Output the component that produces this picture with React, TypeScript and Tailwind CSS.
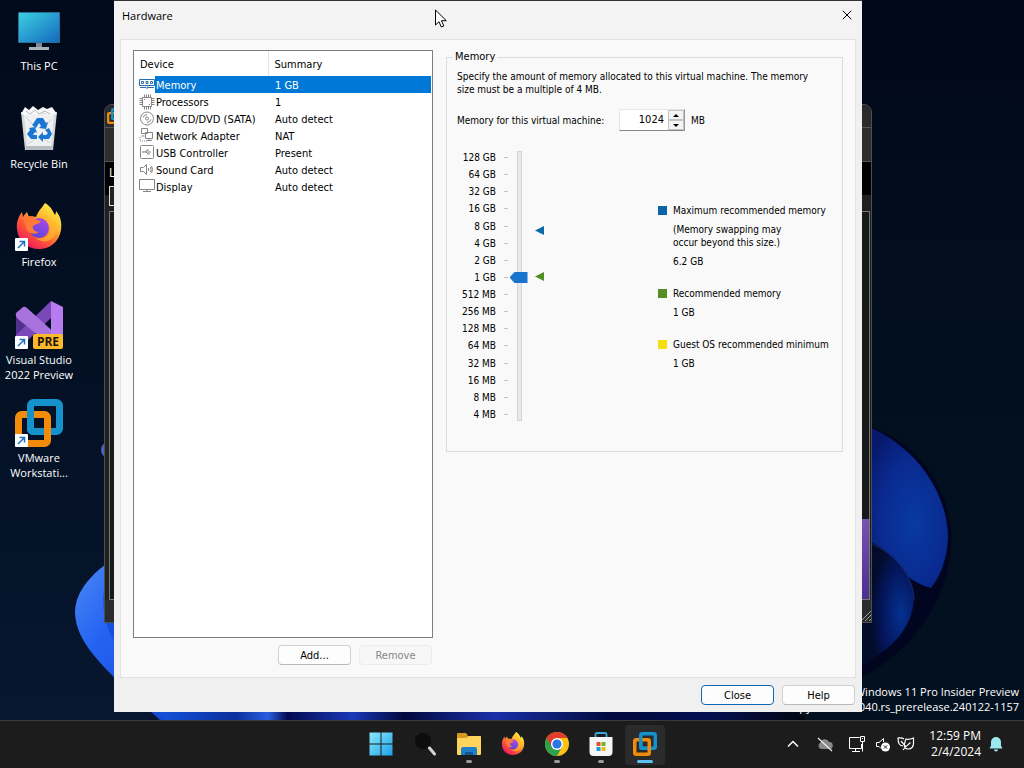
import { ReactNode, useState } from "react";
import { X } from "lucide-react";

export default function App() {
	return (
		<div className="h-screen flex flex-col overflow-hidden bg-[#020c1c] font-['Open_Sans',sans-serif]">
			<main className="relative flex-1 min-h-0">
				<Wallpaper />
				<DesktopIcons />
				<BackWindow />
				<div className="absolute right-[5px] bottom-1.5 text-right text-white text-[11px] leading-[15px]">
					<p>Windows 11 Pro Insider Preview</p>
					<p>Evaluation copy. Build 26040.rs_prerelease.240122-1157</p>
				</div>
				<HardwareDialog />
				<Cursor />
			</main>
			<Taskbar />
		</div>
	);
}

function Wallpaper() {
	return (
		<svg className="absolute inset-0 w-full h-full" viewBox="0 0 1024 720" preserveAspectRatio="none" aria-hidden="true">
			<defs>
				<linearGradient id="sky" x1="0" y1="0" x2="0" y2="1">
					<stop offset="0" stopColor="#010a1a" />
					<stop offset="0.5" stopColor="#031024" />
					<stop offset="1" stopColor="#08172f" />
				</linearGradient>
				<linearGradient id="skyRight" x1="0" y1="0" x2="0" y2="1">
					<stop offset="0" stopColor="#010818" />
					<stop offset="0.5" stopColor="#020f1f" />
					<stop offset="1" stopColor="#03101f" />
				</linearGradient>
				<linearGradient id="petalLeft" x1="0" y1="0" x2="1" y2="1">
					<stop offset="0" stopColor="#4f8bf5" />
					<stop offset="0.35" stopColor="#2463f2" />
					<stop offset="1" stopColor="#0d3fc4" />
				</linearGradient>
				<radialGradient id="petalRight" cx="0.6" cy="0.6" r="0.65">
					<stop offset="0" stopColor="#083aa0" />
					<stop offset="0.6" stopColor="#0a2a90" />
					<stop offset="1" stopColor="#06196a" />
				</radialGradient>
				<radialGradient id="petalInner" cx="0.75" cy="0.6" r="0.6">
					<stop offset="0" stopColor="#053190" />
					<stop offset="0.6" stopColor="#04165c" />
					<stop offset="1" stopColor="#020b2a" />
				</radialGradient>
				<linearGradient id="stems" x1="0" y1="0" x2="1" y2="0">
					<stop offset="0" stopColor="#1552dc" />
					<stop offset="0.12" stopColor="#0b2f9c" />
					<stop offset="0.17" stopColor="#2a5de0" />
					<stop offset="0.2" stopColor="#030a50" />
					<stop offset="0.3" stopColor="#1a38b8" />
					<stop offset="0.38" stopColor="#02083c" />
					<stop offset="0.52" stopColor="#1a2fa8" />
					<stop offset="0.7" stopColor="#020a3c" />
					<stop offset="0.85" stopColor="#031050" />
					<stop offset="1" stopColor="#02060f" />
				</linearGradient>
			</defs>
			<rect width="512" height="720" fill="url(#sky)" />
			<rect x="512" width="512" height="720" fill="url(#skyRight)" />
			<circle cx="109" cy="450" r="8" fill="#4f62c0" />
			<path d="M125 552C92 570 75 592 75 612C76 642 98 664 160 720H210V552Z" fill="url(#petalLeft)" />
			<path d="M106 578C98 615 106 640 150 690L180 640L130 560Z" fill="#1350dc" />
			<path d="M158 711H800L806 720H166Z" fill="url(#stems)" />
			<path d="M860 424C915 436 954 490 951 545C947 607 908 655 855 681Z" fill="#01051f" />
			<path d="M862 424C915 444 948 492 948 538C947 560 940 577 931 588C905 582 885 552 862 540Z" fill="url(#petalRight)" />
			<path d="M862 538C893 550 914 575 914 600C911 630 892 648 862 665Z" fill="url(#petalInner)" />
			<path d="M862 540C893 550 914 575 914 600" fill="none" stroke="#17276a" />
		</svg>
	);
}

function DesktopIcons() {
	const shortcuts = [
		{ label: ["This PC"], icon: <PcIcon />, linked: false },
		{ label: ["Recycle Bin"], icon: <BinIcon />, linked: false },
		{ label: ["Firefox"], icon: <FirefoxIcon className="size-12" />, linked: true },
		{ label: ["Visual Studio", "2022 Preview"], icon: <StudioIcon />, linked: true },
		{ label: ["VMware", "Workstati..."], icon: <VmwareIcon className="size-12" />, linked: true },
	];
	return (
		<nav className="relative w-[78px] pt-[7px] text-white text-center text-[11px] leading-[15px]">
			{shortcuts.map((item) => (
				<a key={item.label[0]} href="#" className="h-[98px] flex flex-col items-center whitespace-nowrap">
					<span className="relative size-12 mb-[3px]">
						{item.icon}
						{item.linked && <ShortcutArrow />}
					</span>
					{item.label.map((line) => (
						<span key={line}>{line}</span>
					))}
				</a>
			))}
		</nav>
	);
}

function ShortcutArrow() {
	return (
		<svg className="absolute left-0 bottom-0 size-[13px]" viewBox="0 0 13 13">
			<rect width="13" height="13" rx="1" fill="#fff" />
			<path d="M3 10L9 4M4.500 3.500H9.500V8.500" fill="none" stroke="#1b72c4" strokeWidth="1.500" />
		</svg>
	);
}

function PcIcon() {
	return (
		<svg viewBox="0 0 48 48" className="size-12">
			<defs>
				<linearGradient id="screen" x1="0" y1="0" x2="1" y2="1">
					<stop offset="0" stopColor="#39cfe0" />
					<stop offset="1" stopColor="#1669c0" />
				</linearGradient>
			</defs>
			<rect x="3" y="5" width="42" height="31" rx="1" fill="#286f98" />
			<rect x="4" y="6" width="40" height="29" fill="url(#screen)" />
			<path d="M21 36h6v5h-6z" fill="#7d8b96" />
			<path d="M14 40h20v3H14z" fill="#a9b3ba" />
		</svg>
	);
}

function BinIcon() {
	return (
		<svg viewBox="0 0 48 48" className="size-12">
			<path d="M6 7L42 7L38 45H10Z" fill="#d5d8dc" />
			<path d="M9 9L39 9L36 41H12Z" fill="#eef0f2" />
			<path d="M6 9L10 2L14 5L18 1L23 5L28 2L32 4L37 2L42 9L36 10L29 8L22 10L15 9L10 10Z" fill="#f8f8f8" />
			<path d="M11 6L15 9L20 5L24 9L30 6L35 9" fill="none" stroke="#b4b8bc" />
			<path d="M11 12L18 20M13 39L20 34M37 14L31 20M35 38L29 34" stroke="#cfd2d6" />
			<path d="M10 41H38L37 45H11Z" fill="#b9bdc2" />
			<g fill="#1976d2">
				<path d="M18 19L22 13H28L31 18L33 17L31 24L24 23L26 21L24 18L21 23L17 20Z" />
				<path d="M34 23L37 29L34 34H28V37L23 32L28 27V30H31L33 28L30 25Z" />
				<path d="M14 23L20 22L22 28L20 27L18 30H22V34H16L12 29L15 25Z" />
			</g>
		</svg>
	);
}

function FirefoxIcon({ className }: { className: string }) {
	return (
		<svg viewBox="0 0 48 48" className={className}>
			<defs>
				<linearGradient id="fire" x1="0.85" y1="0.05" x2="0.2" y2="0.95">
					<stop offset="0" stopColor="#fff04a" />
					<stop offset="0.35" stopColor="#ffb52e" />
					<stop offset="0.65" stopColor="#ff5a36" />
					<stop offset="1" stopColor="#f0175f" />
				</linearGradient>
				<linearGradient id="globe" x1="0.8" y1="0" x2="0.2" y2="1">
					<stop offset="0" stopColor="#b045e8" />
					<stop offset="1" stopColor="#5148d8" />
				</linearGradient>
			</defs>
			<path d="M30 0C37 4 38 9 40 12C41 10 41 9 41 8C46 14 47 20 46 27C44 39 35 46 24 46C12 46 3 38 2 26C1 19 4 13 7 9L8 14C9 12 11 10 12 9L14 14C16 13 18 13 21 14C23 8 26 6 30 0Z" fill="url(#fire)" />
			<circle cx="24" cy="25" r="10" fill="url(#globe)" />
			<path d="M8 15C13 11 19 14 22 17L26 18C25 21 20 21 18 23C17 26 20 29 24 29C20 32 13 31 11 25C10 22 10 18 8 15Z" fill="#ff7a35" />
			<path d="M25 15C33 14 37 20 35 27C34 33 28 37 20 35C33 44 45 34 40 18C37 20 35 14 31 12Z" fill="#ffb52e" opacity="0.75" />
		</svg>
	);
}

function StudioIcon() {
	return (
		<svg viewBox="0 0 48 48" className="size-12">
			<path d="M1 14V42L12 35V20Z" fill="#52318f" />
			<path d="M1 34L36 0V17L10 42L1 40Z" fill="#7a48b8" />
			<path d="M1 12L8 6Q10 5 12 7L42 34L36 45L3 18Q0 15 1 12Z" fill="#a873dc" />
			<path d="M36 0L48 6V41L36 47Z" fill="#b77cf0" />
			<rect x="18" y="33" width="30" height="15" rx="2" fill="#fcb92c" />
			<text x="33" y="45" textAnchor="middle" fontSize="12" fontWeight="700" fontFamily="Open Sans, sans-serif" fill="#1d1608">PRE</text>
		</svg>
	);
}

function VmwareIcon({ className }: { className: string }) {
	return (
		<svg viewBox="0 0 48 48" className={className} fill="none" strokeWidth="7">
			<rect x="15.500" y="3.500" width="29" height="29" rx="3" stroke="#1492cb" />
			<rect x="3.500" y="15.500" width="29" height="29" rx="3" stroke="#f38b0a" />
			<path d="M15.500 11V29.500Q15.500 32.500 18.500 32.500H28" stroke="#1492cb" />
		</svg>
	);
}

// VMware main window, only its edges show around the dialog
function BackWindow() {
	return (
		<div className="absolute top-[104px] left-[104px] right-[152px] bottom-[97px] flex flex-col rounded-t-lg border border-[#4b4f52] bg-[#202020] overflow-hidden text-white" aria-hidden="true">
			<div className="h-[23px] shrink-0 flex items-center pl-0.5 border-b border-[#555] bg-[#2a2a2a]">
				<VmwareIcon className="size-4" />
			</div>
			<div className="h-[34px] shrink-0 border-b border-[#555] bg-[#2e2e2e]" />
			<div className="h-[33px] shrink-0 px-1 bg-black flex flex-col gap-0.5">
				<span className="text-[12px] leading-[22px]">Library</span>
				<div className="h-5 shrink-0 w-40 border border-[#ddd] bg-[#222]" />
			</div>
			<div className="flex-1 flex flex-col justify-end items-end mt-4 ml-1 mr-px border border-[#777] bg-[#171a1b]">
				<div className="w-1/4 h-20 bg-linear-to-b from-[#7952b3] to-[#4c2d91]" />
			</div>
			<div className="h-[22px] shrink-0 flex justify-end items-end bg-[#2a2c2d]">
				<svg viewBox="0 0 10 12" className="w-2.5 h-3" stroke="#a0a0a0">
					<path d="M0 11L10 1M4 11L10 5M8 11L10 9" />
				</svg>
			</div>
		</div>
	);
}

function HardwareDialog() {
	return (
		<section
			role="dialog"
			aria-label="Hardware"
			className="absolute top-0 bottom-2 left-[114px] right-[162px] flex flex-col border-t border-[#333] bg-[#f0f0f0] text-black text-[11px] leading-[13px] font-['DejaVu_Sans_Condensed','DejaVu_Sans',sans-serif]"
		>
			<header className="h-[38px] shrink-0 flex items-start justify-between px-2 bg-[#f3f3f3]">
				<h1 className="pt-[7px] leading-[15px] font-['Open_Sans',sans-serif]">Hardware</h1>
				<button aria-label="Close window" className="pt-1.5 -mr-px">
					<X className="size-4" strokeWidth={1.5} />
				</button>
			</header>
			<div className="flex-1 min-h-0 mx-1.5 flex gap-[13px] pt-2.5 pb-3 px-3 border border-[#e2e2e2] bg-[#f9f9f9]">
				<div className="w-[300px] shrink-0 flex flex-col">
					<DeviceTable />
					<div className="flex justify-end gap-2 pt-[7px] pr-px">
						<DialogButton>Add...</DialogButton>
						<DialogButton disabled>Remove</DialogButton>
					</div>
				</div>
				<MemoryPanel />
			</div>
			<footer className="h-[34px] shrink-0 flex justify-end items-center gap-2 pr-[7px]">
				<DialogButton primary>Close</DialogButton>
				<DialogButton>Help</DialogButton>
			</footer>
		</section>
	);
}

function DialogButton({ children, primary, disabled }: { children: ReactNode; primary?: boolean; disabled?: boolean }) {
	let look = "border-[#d0d0d0] border-b-[#b8b8b8] bg-[#fdfdfd]";
	if (primary) look = "border-[#1068b4] bg-[#fdfdfd]";
	if (disabled) look = "border-[#ececec] bg-[#f7f7f7] text-[#868686]";
	return (
		<button disabled={disabled} className={`w-[73px] h-5 rounded border ${look}`}>
			{children}
		</button>
	);
}

function DeviceTable() {
	const [selected, setSelected] = useState("Memory");
	const devices = [
		{ name: "Memory", summary: "1 GB", icon: <path d="M.5 2.500h15v6H.5zM2.500 4.500h2v2h-2zM7 4.500h2v2h-2zM11.500 4.500h2v2h-2zM1 10.500h6M8 12v-2h1M9 10.500h6" /> },
		{ name: "Processors", summary: "1", icon: <path d="M3.500 3.500h9v9h-9zM5.500 .5v3M7.500 .5v3M9.500 .5v3M11.500 .5v3M5.500 12.500v3M7.500 12.500v3M9.500 12.500v3M11.500 12.500v3M.5 4.500h3M.5 6.500h3M.5 8.500h3M.5 10.500h3M12.500 4.500h3M12.500 6.500h3M12.500 8.500h3M12.500 10.500h3M5 5.500h1M10 10.500h1" /> },
		{ name: "New CD/DVD (SATA)", summary: "Auto detect", icon: <><circle cx="8" cy="7.500" r="6.500" /><circle cx="8" cy="7.500" r="1.500" /><path d="M4 6.500q1-3 4-3M12 8.500q-1 3-4 3" /></> },
		{ name: "Network Adapter", summary: "NAT", icon: <><path d="M2.500 .5h6v5h-6zM6.500 4.500h7v6h-7zM8 12.500h5M10 10v2M2.500 8h3" /><path d="M1 9v4h7" strokeDasharray="1 1" /></> },
		{ name: "USB Controller", summary: "Present", icon: <><rect x="1.500" y=".5" width="13" height="13" rx="1" /><path d="M4 7h8M6 7l2-2h2M7 7l2 2h2M4 6v2" /></> },
		{ name: "Sound Card", summary: "Auto detect", icon: <path d="M1.500 5.500h3l3-3v10l-3-3h-3zM9.500 6v3M11.500 5q1 2.500 0 5M12.500 4q2 3.500 0 7" /> },
		{ name: "Display", summary: "Auto detect", icon: <path d="M.5 .5h15v10H.5zM8 10.500v2M4 12.500h8" /> },
	];
	return (
		<div className="flex-1 min-h-0 border border-[#7a7d83] bg-white pr-px">
			<table className="w-full table-fixed border-collapse text-left">
				<colgroup>
					<col className="w-[21px]" />
					<col className="w-[113px]" />
					<col />
				</colgroup>
				<thead>
					<tr className="h-[25px]">
						<th colSpan={2} className="p-0 pl-1.5 pt-px font-normal border-r border-[#e5e5e5]">Device</th>
						<th className="p-0 pl-1.5 pt-px font-normal">Summary</th>
					</tr>
				</thead>
				<tbody>
					{devices.map((device) => (
						<tr key={device.name} onClick={() => setSelected(device.name)} className="h-[17px] whitespace-nowrap">
							<td className="p-0 pl-[5px]">
								<svg viewBox="0 0 16 16" className={`size-4 ${device.name === selected ? "text-[#2a6cae]" : "text-[#858585]"}`} fill="none" stroke="currentColor">
									{device.icon}
								</svg>
							</td>
							<td className={`p-0 pl-px pt-px ${device.name === selected ? "bg-[#0078d7] text-white" : ""}`}>{device.name}</td>
							<td className={`p-0 pl-[7px] pt-px ${device.name === selected ? "bg-[#0078d7] text-white" : ""}`}>{device.summary}</td>
						</tr>
					))}
				</tbody>
			</table>
		</div>
	);
}

function MemoryPanel() {
	const [memory, setMemory] = useState(1024);
	return (
		<fieldset className="flex-1 min-w-0 self-start border border-[#dcdcdc] px-2.5 pb-[30px] text-[10px]">
			<legend className="-ml-1 px-0.5 text-[11px] leading-[14px]">Memory</legend>
			<p className="pt-1.5">
				Specify the amount of memory allocated to this virtual machine. The memory
				<br />
				size must be a multiple of 4 MB.
			</p>
			<div className="mt-[13px] flex items-center">
				<label htmlFor="memory" className="w-[162px] whitespace-nowrap">Memory for this virtual machine:</label>
				<div className="flex w-[66px] h-[22px] border border-[#e6e6e6] border-b-[#868686] border-r-[#999] bg-white">
					<input
						id="memory"
						type="text"
						inputMode="numeric"
						value={memory}
						onChange={(e) => setMemory(Number(e.target.value) || 0)}
						className="min-w-0 flex-1 pr-1 pb-0.5 text-right text-[11px] outline-none"
					/>
					<div className="w-4 flex flex-col">
						<StepButton label="Increase memory" path="M1 4L4 1L7 4Z" onClick={() => setMemory(memory + 4)} />
						<StepButton label="Decrease memory" path="M1 1L4 4L7 1Z" onClick={() => setMemory(memory - 4)} />
					</div>
				</div>
				<span className="pl-1.5">MB</span>
			</div>
			<div className="mt-5 flex items-start justify-between">
				<MemorySlider memory={memory} setMemory={setMemory} />
				<MemoryKey />
			</div>
		</fieldset>
	);
}

function StepButton({ label, path, onClick }: { label: string; path: string; onClick: () => void }) {
	return (
		<button aria-label={label} onClick={onClick} className="flex-1 flex items-center justify-center border border-[#c4c4c4] bg-[#f4f4f4]">
			<svg viewBox="0 0 8 5" className="w-2 h-[5px]">
				<path d={path} />
			</svg>
		</button>
	);
}

function MemorySlider({ memory, setMemory }: { memory: number; setMemory: (mb: number) => void }) {
	const sizes = ["128 GB", "64 GB", "32 GB", "16 GB", "8 GB", "4 GB", "2 GB", "1 GB", "512 MB", "256 MB", "128 MB", "64 MB", "32 MB", "16 MB", "8 MB", "4 MB"];
	return (
		<div className="flex h-[270px]">
			<ul className="w-[51px] flex flex-col justify-between">
				{sizes.map((size) => (
					<li key={size} className="flex items-center justify-end gap-2 whitespace-nowrap">
						{size}
						<span className="w-1 h-px bg-[#c4c4c4]" />
					</li>
				))}
			</ul>
			<input
				type="range"
				aria-label="Memory size"
				min={0}
				max={15}
				value={Math.round(Math.log2(Math.max(memory, 4) / 4))}
				onChange={(e) => setMemory(4 * 2 ** Number(e.target.value))}
				className="w-[22px] h-[270px] appearance-none bg-transparent [writing-mode:vertical-lr] [direction:rtl] [&::-webkit-slider-runnable-track]:w-[5px] [&::-webkit-slider-runnable-track]:border [&::-webkit-slider-runnable-track]:border-[#d3d3d3] [&::-webkit-slider-runnable-track]:bg-[#e7eaea] [&::-webkit-slider-thumb]:appearance-none [&::-webkit-slider-thumb]:w-[18px] [&::-webkit-slider-thumb]:h-[11px] [&::-webkit-slider-thumb]:-ml-2 [&::-webkit-slider-thumb]:bg-[#1874cf] [&::-webkit-slider-thumb]:[clip-path:polygon(0_50%,28%_0,100%_0,100%_100%,28%_100%)]"
			/>
			<svg viewBox="0 0 20 270" className="w-5 h-[270px]" aria-hidden="true">
				<path d="M5 79.500L14 75V84Z" fill="#0e69a8" />
				<path d="M5 125.500L14 121V130Z" fill="#4f8f22" />
			</svg>
		</div>
	);
}

function MemoryKey() {
	return (
		<dl className="w-[174px] pt-[53px] flex flex-col gap-[19px] whitespace-nowrap">
			<div>
				<dt className="flex items-center gap-1.5">
					<span className="shrink-0 size-[9px] bg-[#0b63a8]" />
					Maximum recommended memory
				</dt>
				<dd className="pl-[15px] pt-1.5">
					(Memory swapping may
					<br />
					occur beyond this size.)
				</dd>
				<dd className="pl-[15px] pt-1.5">6.2 GB</dd>
			</div>
			<div>
				<dt className="flex items-center gap-1.5">
					<span className="shrink-0 size-[9px] bg-[#568c25]" />
					Recommended memory
				</dt>
				<dd className="pl-[15px] pt-1.5">1 GB</dd>
			</div>
			<div>
				<dt className="flex items-center gap-1.5">
					<span className="shrink-0 size-[9px] bg-[#f6df10]" />
					Guest OS recommended minimum
				</dt>
				<dd className="pl-[15px] pt-1.5">1 GB</dd>
			</div>
		</dl>
	);
}

function Cursor() {
	return (
		<svg className="absolute left-[435px] top-[9px] w-3 h-[19px]" viewBox="0 0 12 19" aria-hidden="true">
			<path d="M.5 1V16L4 12.700L6.300 18L8.800 17L6.500 11.700H11.300Z" fill="#fff" stroke="#000" />
		</svg>
	);
}

function Taskbar() {
	const apps = [
		{ name: "Start", icon: <StartIcon />, mark: "bg-transparent" },
		{ name: "Search", icon: <SearchIcon />, mark: "bg-transparent" },
		{ name: "File Explorer", icon: <FolderIcon />, mark: "w-1.5 bg-[#9a9a9a]" },
		{ name: "Firefox", icon: <FirefoxIcon className="size-6" />, mark: "bg-transparent" },
		{ name: "Chrome", icon: <ChromeIcon />, mark: "w-1.5 bg-[#9a9a9a]" },
		{ name: "Microsoft Store", icon: <StoreIcon />, mark: "w-1.5 bg-[#9a9a9a]" },
		{ name: "VMware Workstation", icon: <VmwareIcon className="size-6" />, mark: "w-4 bg-[#5cc0f5]" },
	];
	return (
		<footer className="h-12 shrink-0 grid grid-cols-[1fr_auto_1fr] items-center border-t border-[#3a3a3c] bg-[#1c1c1c] text-white">
			<div />
			<div className="flex gap-1 pl-0.5">
				{apps.map((app) => (
					<button
						key={app.name}
						aria-label={app.name}
						className={`w-10 h-10 pb-0.5 flex flex-col items-center justify-end gap-1 rounded ${app.name === "VMware Workstation" ? "bg-[#2b2b2b]" : ""}`}
					>
						{app.icon}
						<span className={`h-[3px] rounded-full ${app.mark}`} />
					</button>
				))}
			</div>
			<Tray />
		</footer>
	);
}

function Tray() {
	return (
		<div className="flex items-center justify-end pr-[21px] pb-px">
			<svg viewBox="0 0 16 16" className="size-4 mr-4" fill="none" stroke="#fff" strokeWidth="1.500">
				<path d="M3 10.500L8 5.500L13 10.500" />
			</svg>
			<svg viewBox="0 0 16 16" className="size-4 mr-4">
				<path d="M4 13A3.500 3.500 0 0 1 3.500 6.500A4.500 4.500 0 0 1 12 6A3.500 3.500 0 0 1 12.500 13Z" fill="#8a8a8a" />
				<path d="M1 2L15 15" stroke="#eee" strokeWidth="1.200" />
			</svg>
			<svg viewBox="0 0 16 16" className="size-4 mr-2.5" fill="none" stroke="#fff">
				<path d="M10.500 1.500H.5V12.500H12.500V8M6.500 12.500V15.500M3 15.500H11M11.500 .5H15.500V5.500H11.500ZM13.500 5.500V15.500M13 2.500h1" />
			</svg>
			<svg viewBox="0 0 16 16" className="size-4 mr-1.5" fill="none" stroke="#fff">
				<path d="M1.500 6.500H4L8.500 2.500V6M1.500 6.500V10.500H4L6 12.500" />
				<circle cx="10.500" cy="11" r="4.500" fill="#fff" stroke="none" />
				<path d="M8.800 9.300L12.200 12.700M12.200 9.300L8.800 12.700" stroke="#222" />
			</svg>
			<svg viewBox="0 0 18 16" className="w-[18px] h-4 mr-3.5" fill="none" stroke="#fff" strokeWidth="1.200">
				<path d="M7 3C5 1.500 3 2 1 2C1 6 2 10 6 10M4 5L9 11M9 3C12 4 14 3 16.500 2V7C16.500 11 14 13 11 13C8 13 7 11 7.500 8C8 6 8 5 9 3ZM6 14C8 11 11 9 13.500 6.500" />
			</svg>
			<time className="text-right text-[12px] leading-4">
				<span className="block">12:59 PM</span>
				<span className="block">2/4/2024</span>
			</time>
			<svg viewBox="0 0 14 16" className="w-3.5 h-4 ml-2" fill="#9be9ee">
				<path d="M7 1A5 5 0 0 1 12 6V9.500L13.500 12.500H.5L2 9.500V6A5 5 0 0 1 7 1ZM5 13.500H9A2 2 0 0 1 5 13.500Z" />
			</svg>
		</div>
	);
}

function StartIcon() {
	return (
		<svg viewBox="0 0 24 24" className="size-6">
			<defs>
				<linearGradient id="start" x1="0" y1="0" x2="24" y2="24" gradientUnits="userSpaceOnUse">
					<stop offset="0" stopColor="#8cecf8" />
					<stop offset="1" stopColor="#1c9eea" />
				</linearGradient>
			</defs>
			<path d="M.5 .5h11v11H.5zM12.500 .5h11v11h-11zM.5 12.500h11v11H.5zM12.500 12.500h11v11h-11z" fill="url(#start)" />
		</svg>
	);
}

function SearchIcon() {
	return (
		<svg viewBox="0 0 24 24" className="size-6">
			<circle cx="10" cy="9" r="8" fill="#0d0d0d" />
			<path d="M16.500 16L21.500 22" stroke="#d5d5d5" strokeWidth="3" strokeLinecap="round" />
		</svg>
	);
}

function FolderIcon() {
	return (
		<svg viewBox="0 0 24 24" className="size-6">
			<path d="M0 2Q0 1 1 1H9L11 4H23Q24 4 24 5V10H0Z" fill="#d99a1c" />
			<path d="M0 6H9L12 4H23Q24 4 24 5V22Q24 23 23 23H1Q0 23 0 22Z" fill="#ffd45c" />
			<path d="M4 23V17Q4 15 6 15H18Q20 15 20 17V23Z" fill="#1d7fc8" />
			<path d="M8 20H16V23H8Z" fill="#12578f" />
		</svg>
	);
}

function ChromeIcon() {
	return (
		<svg viewBox="0 0 24 24" className="size-6">
			<circle cx="12" cy="12" r="12" fill="#fbc116" />
			<path d="M12 12L1.600 6A12 12 0 0 0 12 24L17 15Z" fill="#2da14c" />
			<path d="M12 12L6.800 15L1.600 6A12 12 0 0 1 22.400 6H12Z" fill="#e33b2e" />
			<circle cx="12" cy="12" r="6" fill="#fff" />
			<circle cx="12" cy="12" r="4.600" fill="#2a78e4" />
		</svg>
	);
}

function StoreIcon() {
	return (
		<svg viewBox="0 0 24 24" className="size-6">
			<path d="M6.500 6V2.500Q6.500 1 8 1H16Q17.500 1 17.500 2.500V6" fill="none" stroke="#37a8d8" strokeWidth="1.800" />
			<path d="M.5 5H23.500V20Q23.500 24 19.500 24H4.500Q.5 24 .5 20Z" fill="#f4f6f8" />
			<path d="M7.500 10h4v4h-4z" fill="#e8502a" />
			<path d="M12.500 10h4v4h-4z" fill="#78b41c" />
			<path d="M7.500 15h4v4h-4z" fill="#18a0dc" />
			<path d="M12.500 15h4v4h-4z" fill="#f8b818" />
		</svg>
	);
}
